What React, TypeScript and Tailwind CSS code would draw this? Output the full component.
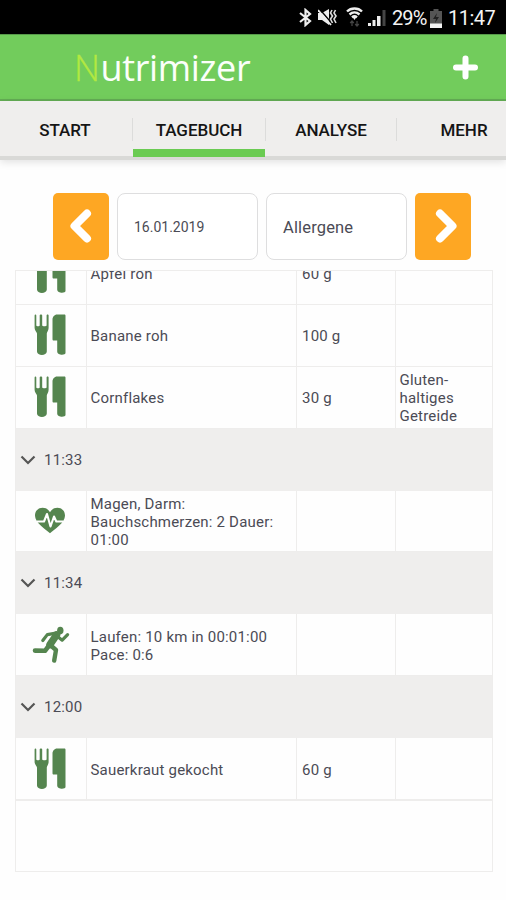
import type { ReactNode } from "react";

const FONT = "font-['Roboto','Noto_Sans',sans-serif]";

function Cutlery() {
  return (
    <svg width="32" height="42" viewBox="0 0 32 42" fill="#55854f" className="mr-px">
      <path d="M.6 1.5C.6.3 2.3.3 2.3 1.5V11.5C2.3 12.6 5.7 12.6 5.7 11.5V1.5C5.7.2 8.2.2 8.2 1.5V11.5C8.2 12.6 12.6 12.6 12.6 11.5V1.5C12.6.3 14.6.3 14.6 1.5V14C14.6 16.8 12.8 18 12.8 19.5V37.5C12.8 42 3 42 3 37.5V19.5C3 18 .6 16.8 .6 14Z" />
      <path d="M23 .5H30.5C31.3.5 31.5 1 31.5 2V39C31.5 41.5 23.2 41.5 23.2 37.5V26.5H20C18.8 26.5 18.5 26 18.5 25V5.5C18.5 3 20.5 .5 23 .5Z" />
    </svg>
  );
}

function Pulse() {
  return (
    <svg width="32" height="27" viewBox="0 0 32 27" fill="none" className="mr-px">
      <path d="M16 26.3C12 22.6 1 15.8 1 8.8C1 3.6 4.4.8 8.6.8C12 .8 14.5 2.6 16 5.2C17.5 2.6 20 .8 23.4.8C27.6.8 31 3.6 31 8.8C31 15.8 20 22.6 16 26.3Z" fill="#55854f" />
      <path d="M2.5 14.5H10L13 7L16.5 19.5L20 9.5L22.3 14.5H29.5" stroke="#fff" strokeWidth="2.1" strokeLinejoin="round" />
    </svg>
  );
}

function Runner() {
  return (
    <svg width="38" height="38" viewBox="0 0 38 38" fill="none" stroke="#55854f" strokeLinecap="round" strokeLinejoin="round">
      <ellipse cx="28.3" cy="4.6" rx="3.2" ry="3.8" fill="#55854f" stroke="none" />
      <path d="M24.5 9L18 18.5" strokeWidth="7.4" />
      <path d="M24 7.2L15.3 8.6L10.8 14.5" strokeWidth="3.2" />
      <path d="M25.5 10.5L30.2 14.2L35.6 8.6" strokeWidth="3.2" />
      <path d="M17 19.5L13 24.8L3 24.6" strokeWidth="4.6" />
      <path d="M18.8 19.5L24 24L22.2 34.6" strokeWidth="4.4" />
    </svg>
  );
}

function Item({ icon, name, amount, note }: { icon: ReactNode; name: ReactNode; amount?: string; note?: ReactNode }) {
  return (
    <div className="grid h-[61.9px] shrink-0 grid-cols-[70.5px_210.5px_98.5px_1fr] border-b border-[#eeedec] *:flex *:items-center">
      <div className="justify-center border-r-[1.5px] border-[#eeedec]">{icon}</div>
      <div className="border-r-[1.5px] border-[#eeedec] pt-0.5 pl-1"><p>{name}</p></div>
      <div className="border-r-[1.5px] border-[#eeedec] pt-0.5 pl-[5px]">{amount}</div>
      <div className="pt-0.5 pl-1"><p>{note}</p></div>
    </div>
  );
}

function Time({ children }: { children: string }) {
  return (
    <div className="flex h-[61.9px] shrink-0 items-center gap-2 bg-[#efeeed] pl-1">
      <svg width="16" height="10" viewBox="0 0 15 10" fill="none" stroke="#555" strokeWidth="2.2">
        <path d="M1 1.5L7.5 8L14 1.5" />
      </svg>
      <span>{children}</span>
    </div>
  );
}

function Arrow({ right = false }: { right?: boolean }) {
  return (
    <button className="flex h-[67px] w-14 items-center justify-center rounded-[5px] bg-[#fea723]">
      <svg width="24" height="36" viewBox="0 0 24 36" fill="none" stroke="#fff" strokeWidth="8" strokeLinecap="round" strokeLinejoin="round" className={right ? "mb-0.5 ml-[7px]" : "mr-[3px] mb-0.5"}>
        <path d={right ? "M5 5.5L17.5 18L5 30.5" : "M19 5.5L6.5 18L19 30.5"} />
      </svg>
    </button>
  );
}

function StatusBar() {
  return (
    <div className="flex h-[34px] items-center bg-black pl-[299px] text-[#f4f4f4]">
      <svg width="13" height="19" viewBox="0 0 13 19" fill="none" stroke="#eee" strokeWidth="2.2" className="shrink-0">
        <path d="M1 5L11 13L6.5 17V2L11 6L1 14" />
      </svg>
      <svg width="19" height="18" viewBox="0 0 19 18" className="ml-1.5 shrink-0">
        <path d="M0 5H4L11 1V17L4 12H0Z" fill="#eee" />
        <path d="M1 .5L14 15.5" stroke="#000" strokeWidth="1.4" />
        <path d="M0 2L13 17" stroke="#eee" strokeWidth="1.8" />
        <path d="M14 2L12.5 5L14.5 8L12.5 11L14.5 15M17.5 2L16 5L18 8L16 11L18 15" stroke="#ddd" strokeWidth="1.6" fill="none" />
      </svg>
      <svg width="17" height="20" viewBox="0 0 17 20" fill="none" stroke="#eee" strokeWidth="2.4" className="ml-[9px] shrink-0">
        <path d="M1 4.5C5 .5 12 .5 16 4.5M3.5 7.5C6.5 4.8 10.5 4.8 13.5 7.5M6 10.3C7.5 9 9.5 9 11 10.3" />
        <path d="M6.5 10H10.5L8.5 13Z" fill="#eee" stroke="none" />
        <path d="M6 19V14M4.2 16L6 14L7.8 16M11 14V19M9.2 17L11 19L12.8 17" stroke="#444" strokeWidth="1.3" />
      </svg>
      <svg width="18" height="19" viewBox="0 0 18 19" className="ml-[5px] shrink-0">
        <path d="M0 15H3V18H0ZM4.5 12H7.5V18H4.5ZM9 8H12.5V18H9Z" fill="#eee" />
        <path d="M14.5 2H17.5V18H14.5Z" fill="#444" />
      </svg>
      <span className="ml-[6px] w-[36px] pt-0.5 text-[20px] tracking-[-0.9px] whitespace-nowrap">29%</span>
      <svg width="12" height="19" viewBox="0 0 12 19" className="mt-0.5 ml-0.5 shrink-0">
        <path d="M3.5 0H8.5V2H12V19H0V2H3.5Z" fill="#555" />
        <path d="M7 4L3 10H6L5 14L9 8H6Z" fill="#222" />
        <path d="M0 14.5H12V19H0Z" fill="#f4f4f4" />
      </svg>
      <span className="ml-1.5 pt-0.5 text-[20px] tracking-[-0.5px]">11:47</span>
    </div>
  );
}

export default function App() {
  return (
    <div className={`flex h-[900px] w-[506px] flex-col overflow-hidden bg-[#fefefe] text-[#4b4b55] ${FONT}`}>
      <StatusBar />
      <header className="flex h-[67px] shrink-0 items-center justify-between border-t border-b-2 border-t-[#57994a] border-b-[#63ad54] bg-[#72cc5c] pr-7 pl-[74px]">
        <h1 className="pt-0.5 font-['Open_Sans','Noto_Sans',sans-serif] text-[36px] leading-[50px] tracking-[-0.35px] text-[#fbfffa]">
          <span className="font-light tracking-[0.5px] text-[#b2e841] [-webkit-text-stroke:0.4px_#b2e841]">N</span>utrimizer
        </h1>
        <svg width="25" height="26" viewBox="0 0 25 26" stroke="#fff" strokeWidth="6" strokeLinecap="round">
          <path d="M12.5 4.5V22.5M3 13.5H22" />
        </svg>
      </header>
      <nav className="grid h-[59px] shrink-0 grid-cols-[133px_132px_132px_109px] border-b-4 border-[#d9d9d7] bg-[#efeeed] text-[17px] font-medium tracking-[-0.05px] text-[#151515] shadow-[0_2px_8px_rgba(0,0,0,0.12)]">
        <div className="flex h-[59px] items-center justify-center border-r border-transparent pr-0.5 [border-image:linear-gradient(transparent_30%,#dcdcdb_30%,#dcdcdb_68%,transparent_68%)_1]">START</div>
        <div className="flex h-14 items-center justify-center border-b-8 border-[#6acb52] pt-[11px]">TAGEBUCH</div>
        <div className="flex h-[59px] items-center justify-center border-x border-transparent [border-image:linear-gradient(transparent_30%,#dcdcdb_30%,#dcdcdb_68%,transparent_68%)_1]">ANALYSE</div>
        <div className="flex h-[59px] items-center pl-[43.5px]">MEHR</div>
      </nav>
      <div className="mt-[33px] flex h-[67px] shrink-0 gap-2 pl-[53px]">
        <Arrow />
        <div className="flex w-[141px] items-center rounded-lg border-[1.5px] border-[#dededf] bg-white pt-0.5 pl-4 text-[14px]">16.01.2019</div>
        <div className="flex w-[141px] items-center rounded-lg border-[1.5px] border-[#dededf] bg-white pt-[3px] pl-4 text-[16.5px] tracking-[0.15px]">Allergene</div>
        <Arrow right />
      </div>
      <main className="mt-[10px] ml-[15px] flex h-[602px] w-[478px] shrink-0 flex-col justify-end overflow-hidden border-[1.5px] border-[#eeedec] text-[15px] leading-[18px] tracking-[0.2px]">
        <Item icon={<Cutlery />} name="Apfel roh" amount="60 g" />
        <Item icon={<Cutlery />} name="Banane roh" amount="100 g" />
        <Item icon={<Cutlery />} name="Cornflakes" amount="30 g" note={<>Gluten-<br />haltiges<br />Getreide</>} />
        <Time>11:33</Time>
        <Item icon={<Pulse />} name={<>Magen, Darm:<br />Bauchschmerzen: 2 Dauer:<br />01:00</>} />
        <Time>11:34</Time>
        <Item icon={<Runner />} name={<>Laufen: 10 km in 00:01:00<br />Pace: 0:6</>} />
        <Time>12:00</Time>
        <Item icon={<Cutlery />} name="Sauerkraut gekocht" amount="60 g" />
        <div className="h-[71px] shrink-0 border-t border-[#eeedec]" />
      </main>
    </div>
  );
}
